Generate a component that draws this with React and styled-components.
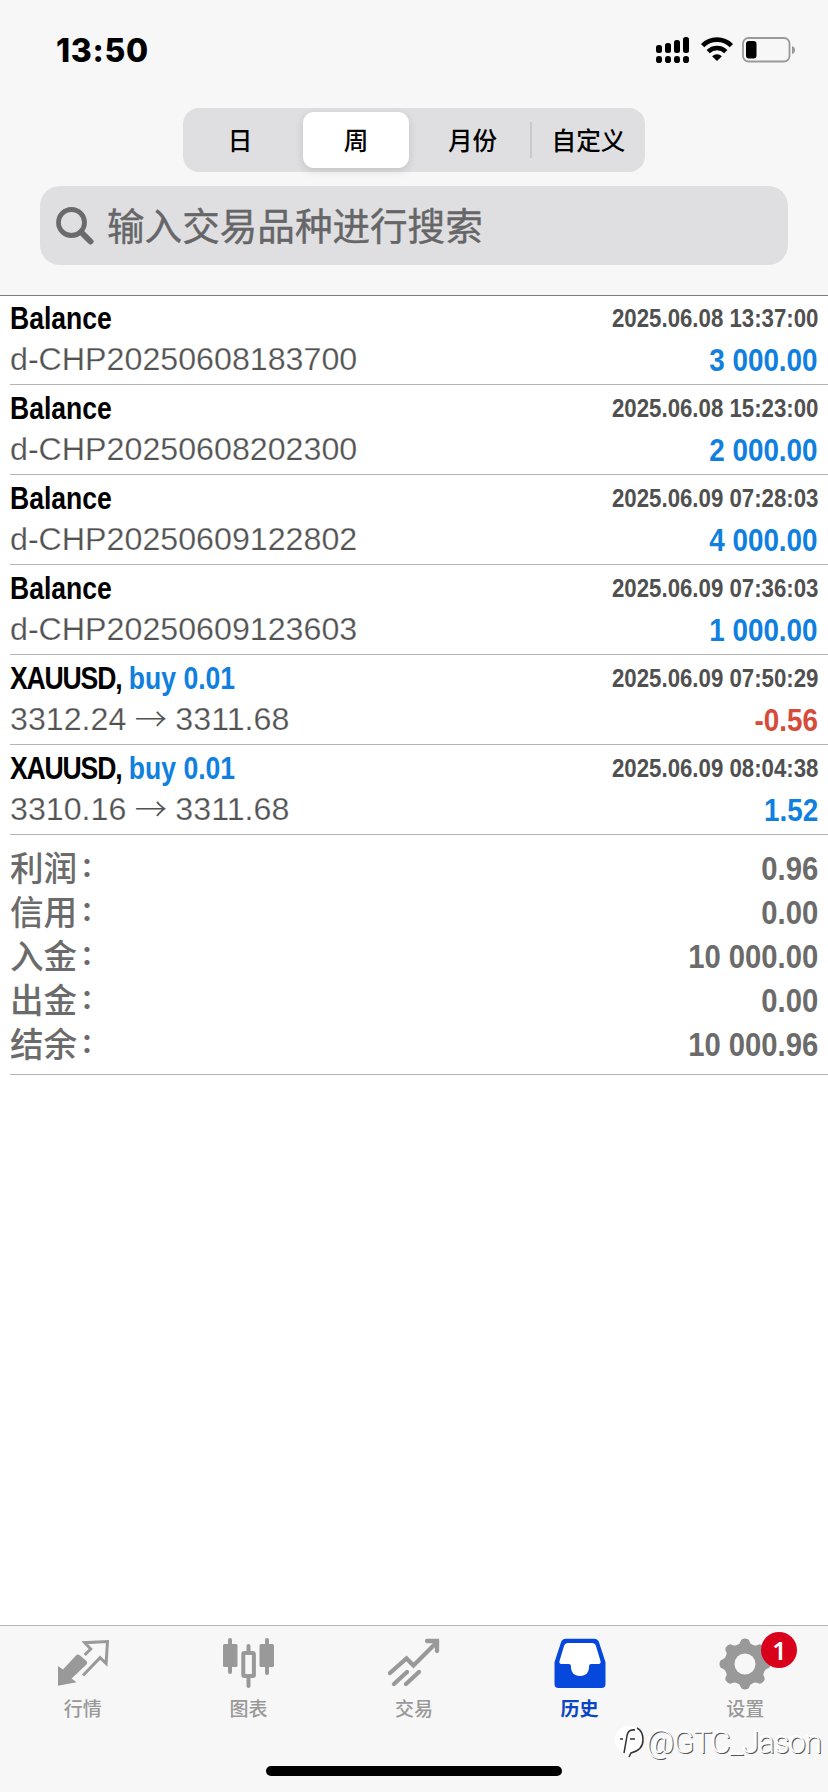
import React from 'react';
import styled, { createGlobalStyle } from 'styled-components';

const GlobalStyle = createGlobalStyle`
  * {
    box-sizing: border-box;
  }
  body {
    margin: 0;
    background: #fff;
    font-family: "Liberation Sans", "Noto Sans CJK SC", sans-serif;
  }
`;

const Screen = styled.div`
  display: flex;
  flex-direction: column;
  width: 828px;
  height: 1792px;
  background: #fff;
  overflow: hidden;
`;

const Header = styled.header`
  display: flex;
  flex-direction: column;
  align-items: center;
  height: 296px;
  background: #f7f7f7;
  border-bottom: 1px solid #7d7d7d;
`;

const StatusBar = styled.div`
  display: flex;
  align-items: center;
  justify-content: space-between;
  width: 100%;
  height: 99px;
  padding: 0 32px 0 56px;
`;

const Clock = styled.span`
  padding-top: 1px;
  font-family: Inter, sans-serif;
  font-size: 32px;
  font-weight: 800;
  letter-spacing: 0.7px;
  color: #000;
`;

const StatusIcons = styled.div`
  display: flex;
  align-items: center;
  svg {
    display: block;
  }
`;

const Segments = styled.div`
  display: flex;
  width: 462px;
  height: 64px;
  margin-top: 9px;
  border-radius: 16px;
  background: #dfdfe1;
`;

const Segment = styled.div`
  display: flex;
  align-items: center;
  justify-content: center;
  width: ${(p) => p.$w}px;
  margin: ${(p) => (p.$active ? '4px 6px' : '14px 0')};
  padding-bottom: 2px;
  border-radius: ${(p) => (p.$active ? '11px' : '0')};
  border-right: ${(p) => (p.$divider ? '2px solid #c9c9cc' : '0')};
  background: ${(p) => (p.$active ? '#fff' : 'transparent')};
  box-shadow: ${(p) => (p.$active ? '0 3px 10px rgba(0, 0, 0, 0.12)' : 'none')};
  font-family: "Noto Sans CJK SC", sans-serif;
  font-size: 24.6px;
  font-weight: 500;
  line-height: 34px;
  color: #000;
`;

const Search = styled.div`
  display: flex;
  align-items: center;
  width: 748px;
  height: 79px;
  margin-top: 14px;
  padding-left: 16px;
  border-radius: 20px;
  background: #dfdfe1;
`;

const Placeholder = styled.span`
  margin-left: 13px;
  padding-bottom: 4px;
  font-family: "Noto Sans CJK SC", sans-serif;
  font-size: 37.6px;
  line-height: 50px;
  color: #666668;
  -webkit-text-stroke: 0.4px #666668;
`;

const List = styled.main`
  flex: 1;
  margin-top: -1px;
  padding-left: 10px;
`;

const Row = styled.div`
  height: 90px;
  padding-top: 1px;
  border-bottom: 1px solid #b5b5b5;
`;

const Line = styled.div`
  display: flex;
  align-items: center;
  justify-content: space-between;
  height: ${(p) => p.$h}px;
  padding-right: 10px;
  white-space: pre;
`;

// Bold condensed face: Liberation Sans squeezed towards one side
const Condensed = styled.span`
  display: inline-block;
  transform: scaleX(${(p) => p.$x || 0.83});
  transform-origin: ${(p) => (p.$right ? 'right' : 'left')} center;
  font-size: ${(p) => p.$size || 32}px;
  font-weight: 700;
  line-height: 40px;
  color: ${(p) => p.$color || '#000'};
`;

const Symbol = styled.span`
  letter-spacing: -1.4px;
`;

const Side = styled.span`
  color: #0f7fe0;
`;

const Amount = styled(Condensed)`
  padding-top: 1px;
`;

const Detail = styled.span`
  font-size: 32.2px;
  line-height: 39px;
  color: #525252;
  -webkit-text-stroke: 0.25px #fff;
`;

const Arrow = styled.span`
  display: inline-block;
  width: 49px;
  font-family: "Noto Sans CJK SC", sans-serif;
  font-weight: 300;
  line-height: 30px;
  text-align: center;
  vertical-align: -1px;
  -webkit-text-stroke: 0;
`;

const Summary = styled.div`
  height: 240px;
  padding-top: 11px;
  border-bottom: 1px solid #b5b5b5;
`;

const SummaryLabel = styled.span`
  padding-bottom: 3px;
  font-family: "Noto Sans CJK SC", sans-serif;
  font-size: 33.6px;
  font-weight: 500;
  line-height: 40px;
  color: #6b6b6b;
`;

const Colon = styled.span`
  margin-left: 3px;
  font-size: 27px;
  font-weight: 700;
  vertical-align: 4px;
  line-height: 1;
`;

const TabBar = styled.nav`
  height: 167px;
  border-top: 1px solid #b5b5b5;
  background: #f7f7f7;
`;

const Tabs = styled.div`
  display: flex;
  height: 140px;
  padding-top: 12px;
`;

const Tab = styled.div`
  position: relative;
  display: flex;
  flex: 1;
  flex-direction: column;
  align-items: center;
  font-family: "Noto Sans CJK SC", sans-serif;
  font-size: 19px;
  font-weight: ${(p) => (p.$active ? 700 : 500)};
  line-height: 28px;
  color: ${(p) => (p.$active ? '#0a45c4' : '#999')};
  svg {
    display: block;
    margin-bottom: 4px;
  }
`;

const Badge = styled.span`
  position: absolute;
  top: -6px;
  left: 99px;
  width: 36px;
  height: 36px;
  border-radius: 50%;
  background: #d9001b;
  font-family: "Noto Sans", sans-serif;
  font-size: 25px;
  font-weight: 600;
  line-height: 36px;
  text-align: center;
  color: #fff;
`;

const HomeIndicator = styled.div`
  width: 296px;
  height: 10px;
  margin: 0 auto;
  border-radius: 5px;
  background: #000;
`;

const Watermark = styled.div`
  position: absolute;
  top: 1721px;
  left: 615px;
  display: flex;
  align-items: center;
  height: 42px;
  font-family: Roboto, "Noto Sans", sans-serif;
  font-size: 31px;
  font-weight: 300;
  letter-spacing: -1px;
  color: #fbfbfb;
  text-shadow: 1px 1px 0 #555, -1px -1px 0 #fff;
`;

const SignalIcon = () => (
  <svg width="33" height="28" viewBox="0 0 33 28">
    {[9, 7, 4, 1].map((y, i) => (
      <g key={y}>
        <rect x={i * 9} y={y} width="6" height={17 - y} rx="2.5" />
        <rect x={i * 9} y="20" width="6" height="7" rx="2.8" />
      </g>
    ))}
  </svg>
);

const WifiIcon = () => (
  <svg width="44" height="28" viewBox="-12 0 44 28">
    <g fill="none" stroke="#000" strokeWidth="4.6">
      <path d="M1.6 9.6a20.4 20.4 0 0 1 28.8 0" />
      <path d="M7.2 15.6a12.6 12.6 0 0 1 17.6 0" />
    </g>
    <path d="M16 25l-4.9-4.7a7 7 0 0 1 9.8 0z" />
  </svg>
);

const BatteryIcon = () => (
  <svg width="63" height="28" viewBox="-9 0 63 28">
    <rect x="1" y="2" width="46.5" height="23.5" rx="5.5" fill="none" stroke="#999" strokeWidth="1.8" />
    <rect x="4" y="5" width="10.5" height="17.5" rx="3" />
    <path d="M50 10q3 1 3 4t-3 4z" fill="#999" />
  </svg>
);

const SearchIcon = () => (
  <svg width="38" height="38" viewBox="0 0 38 38" fill="none" stroke="#6a6a6c">
    <circle cx="15.5" cy="15.5" r="13" strokeWidth="4.8" />
    <path d="M25 25l9.500 9.500" strokeWidth="6" strokeLinecap="round" />
  </svg>
);

const QuotesIcon = () => (
  <svg width="52" height="52" viewBox="0 0 52 52">
    <path d="M1 28l5 3.500L19 17.500q2-2 4 0l6.500 5.500q1.500 1.500 0 3.500L14.500 40.500l5 3.800L1 47.700z" fill="#999" />
    <path d="M27.700 17l6-6-6-6.300L50.500 3.500l-1.400 22-6-5.800L26 37.500" fill="none" stroke="#999" strokeWidth="3" />
  </svg>
);

const ChartIcon = () => (
  <svg width="52" height="52" viewBox="0 0 52 52" fill="#999">
    <rect x="6" y="0" width="4" height="36" rx="2" />
    <rect x="1" y="6" width="14.5" height="23" rx="1.5" />
    <rect x="43" y="0" width="4" height="37" rx="2" />
    <rect x="37.5" y="6" width="14.5" height="23" rx="1.5" />
    <rect x="24.5" y="6" width="4" height="44" rx="2" />
    <rect x="21.3" y="15" width="10.6" height="23" rx="1" fill="#f7f7f7" stroke="#999" strokeWidth="4" />
  </svg>
);

const TradeIcon = () => (
  <svg width="52" height="52" viewBox="0 0 52 52" fill="none" stroke="#999" strokeWidth="4.3">
    <path d="M2 35l16.500-14.500 7 7L49 4" strokeLinecap="round" />
    <path d="M39 3h10v10" strokeLinecap="round" />
    <path d="M6 46l13-12M18 46l13-12" strokeLinecap="round" />
  </svg>
);

const HistoryIcon = () => (
  <svg width="52" height="52" viewBox="0 0 52 52">
    <path d="M12 .8h28q4 0 5 3.500l6.500 20V46q0 4-4 4H4.500q-4 0-4-4V24.300L7 4.300Q8 .8 12 .8z" fill="#0648dc" />
    <path d="M14 5h24q3 0 4 3l4.500 15q.7 3-2 3H37q-2 0-2 3c0 5-3 9-9 9s-9-4-9-9q0-3-2-3H7.500q-2.700 0-2-3L10 8q1-3 4-3z" fill="#fff" />
  </svg>
);

const SettingsIcon = () => (
  <svg width="52" height="52" viewBox="0 0 52 52" fill="#999">
    {[0, 45, 90, 135].map((a) => (
      <path key={a} d="M18 7q3-1 3.500-3.500Q22.200.5 26 .5t4.500 3Q31 6 34 7v38q-3 1-3.500 3.500-.7 3-4.500 3t-4.500-3Q21 46 18 45z" transform={`rotate(${a} 26 26)`} />
    ))}
    <circle cx="26" cy="26" r="20.5" />
    <circle cx="26" cy="26" r="10.5" fill="#f7f7f7" />
  </svg>
);

const WatermarkIcon = () => (
  <svg width="31" height="38" viewBox="0 0 31 38" fill="none">
    <circle cx="14" cy="17" r="14" fill="#fff" />
    <path d="M22 5q6 3 6 12 0 10-12 13l-2 4M20 7q-7-1-8 6l-3 17M5 16h3M15 16h5" stroke="#333" strokeWidth="1.5" />
  </svg>
);

const periods = [
  { label: '日', w: 114 },
  { label: '周', w: 106, active: true },
  { label: '月份', w: 117, divider: true },
  { label: '自定义', w: 113 },
];

const history = [
  { title: 'Balance', detail: 'd-CHP20250608183700', time: '2025.06.08 13:37:00', amount: '3 000.00' },
  { title: 'Balance', detail: 'd-CHP20250608202300', time: '2025.06.08 15:23:00', amount: '2 000.00' },
  { title: 'Balance', detail: 'd-CHP20250609122802', time: '2025.06.09 07:28:03', amount: '4 000.00' },
  { title: 'Balance', detail: 'd-CHP20250609123603', time: '2025.06.09 07:36:03', amount: '1 000.00' },
  { title: 'XAUUSD,', side: 'buy 0.01', from: '3312.24', to: '3311.68', time: '2025.06.09 07:50:29', amount: '-0.56' },
  { title: 'XAUUSD,', side: 'buy 0.01', from: '3310.16', to: '3311.68', time: '2025.06.09 08:04:38', amount: '1.52' },
];

const summary = [
  ['利润', '0.96'],
  ['信用', '0.00'],
  ['入金', '10 000.00'],
  ['出金', '0.00'],
  ['结余', '10 000.96'],
];

const tabs = [
  { label: '行情', icon: <QuotesIcon /> },
  { label: '图表', icon: <ChartIcon /> },
  { label: '交易', icon: <TradeIcon /> },
  { label: '历史', icon: <HistoryIcon />, active: true },
  { label: '设置', icon: <SettingsIcon />, badge: 1 },
];

const HistoryRow = (props) => {
  const v = props.v;
  return (
    <Row>
      <Line $h={43}>
        <Condensed>{v.side ? <><Symbol>{v.title}</Symbol><Side> {v.side}</Side></> : v.title}</Condensed>
        <Condensed $right $size={26} $x={0.855} $color='#505050'>{v.time}</Condensed>
      </Line>
      <Line $h={41}>
        <Detail>{v.from ? <>{v.from}<Arrow>→</Arrow>{v.to}</> : v.detail}</Detail>
        <Amount $right $x={0.87} $color={v.amount[0] === '-' ? '#d64b3a' : '#0f7fe0'}>{v.amount}</Amount>
      </Line>
    </Row>
  );
}

const App = () => {
  return (
    <Screen>
      <GlobalStyle />
      <Header>
        <StatusBar>
          <Clock>13:50</Clock>
          <StatusIcons>
            <SignalIcon />
            <WifiIcon />
            <BatteryIcon />
          </StatusIcons>
        </StatusBar>
        <Segments>
          {periods.map((p) => (
            <Segment key={p.label} $w={p.w} $active={p.active} $divider={p.divider}>{p.label}</Segment>
          ))}
        </Segments>
        <Search>
          <SearchIcon />
          <Placeholder>输入交易品种进行搜索</Placeholder>
        </Search>
      </Header>
      <List>
        {history.map((v) => <HistoryRow key={v.time} v={v} />)}
        <Summary>
          {summary.map(([label, value]) => (
            <Line key={label} $h={44}>
              <SummaryLabel>{label}<Colon>：</Colon></SummaryLabel>
              <Condensed $right $size={34} $x={0.86} $color='#6b6b6b'>{value}</Condensed>
            </Line>
          ))}
        </Summary>
      </List>
      <TabBar>
        <Tabs>
          {tabs.map((t) => (
            <Tab key={t.label} $active={t.active}>
              {t.icon}
              {t.label}
              {t.badge ? <Badge>{t.badge}</Badge> : null}
            </Tab>
          ))}
        </Tabs>
        <HomeIndicator />
      </TabBar>
      <Watermark>
        <WatermarkIcon />
        @GTC_Jason
      </Watermark>
    </Screen>
  );
}
export default App;
